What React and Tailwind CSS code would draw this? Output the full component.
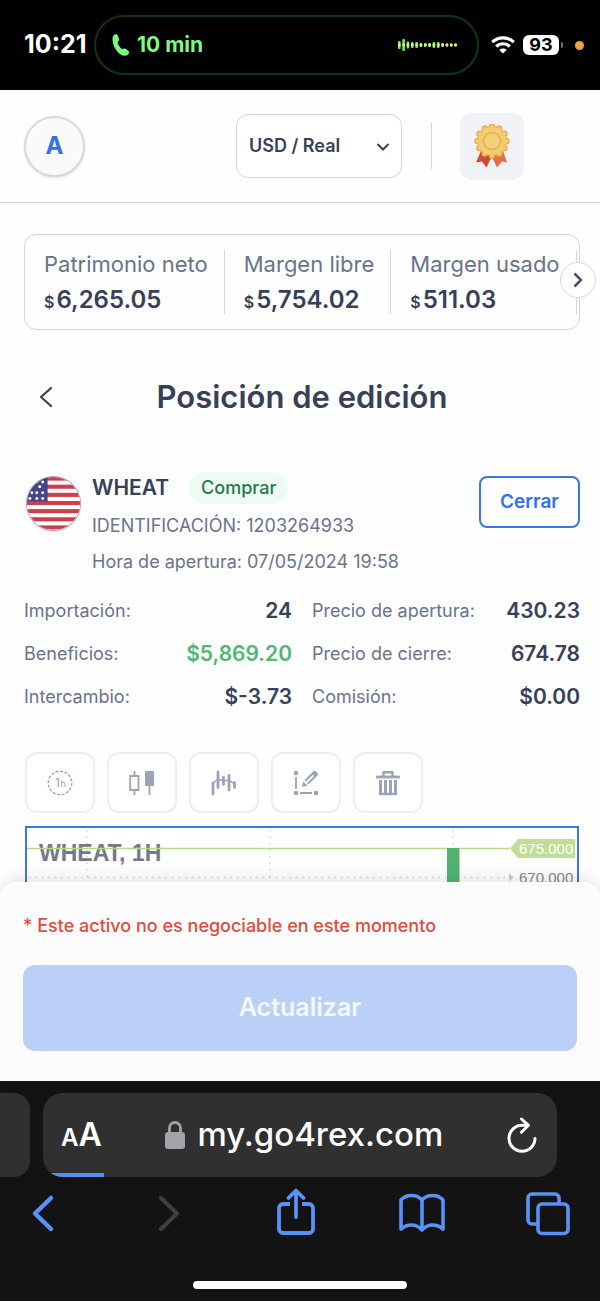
import React from 'react';

const balances = [
  { label: 'Patrimonio neto', value: '6,265.05' },
  { label: 'Margen libre', value: '5,754.02' },
  { label: 'Margen usado', value: '511.03' },
];

const details = [
  { label: 'Importación:', value: '24' },
  { label: 'Precio de apertura:', value: '430.23' },
  { label: 'Beneficios:', value: '$5,869.20', positive: true },
  { label: 'Precio de cierre:', value: '674.78' },
  { label: 'Intercambio:', value: '$-3.73' },
  { label: 'Comisión:', value: '$0.00' },
];

// Call audio level, one bar per sample
const levels = [8, 12, 7, 6, 6, 4, 4, 4, 6, 6, 4, 3, 3, 3];

const StatusBar = () => (
  <div className="flex h-[90px] items-center bg-black text-white">
    <span className="w-[94px] pl-6 text-[25px] font-bold">10:21</span>
    <div className="flex h-[60px] min-w-0 flex-1 items-center rounded-full border-2 border-[#123510] px-4 text-[#7dfa80]">
      <svg className="h-6 w-[18px]" viewBox="0 0 18 24" fill="currentColor" aria-hidden="true">
        <path d="M1.200 3C2.300.8 5 .6 5.800 2.500l1.200 3.500c.4 1.500-.5 2.400-1.500 3.200.6 2.600 2.200 5.200 4.800 7.100 1.200-.7 2.400-1 3.600-.2l2.600 1.900c1.300 1.200.4 3-1 4-2 1.300-4.500.9-6.500-.3C4.500 18.700.8 13 .6 7 .5 5.300.6 4.100 1.200 3z" />
      </svg>
      <span className="ml-[7px] text-[21px] font-bold">10 min</span>
      <svg className="ml-auto mr-[3px] h-4 w-[60px]" viewBox="0 0 60 16" aria-hidden="true">
        {levels.map((h, i) => (
          <g key={i}>
            <rect x={i * 4.33} y={8 - h / 2} width="2.6" height={h} rx="1" fill="#6dee72" />
            <rect x={i * 4.33} y="6.500" width="2.6" height="3" rx="1" fill="#e9ee72" />
          </g>
        ))}
      </svg>
    </div>
    <svg className="ml-3 h-[18px] w-6" viewBox="0 0 24 18" fill="none" stroke="currentColor" strokeWidth="3.200" aria-hidden="true">
      <path d="M1.200 6.200C7.300.3 16.700.3 22.800 6.200" />
      <path d="M5.200 10.500c3.900-3.700 9.700-3.700 13.600 0" />
      <path d="M8.300 13.900c2.200-1.900 5.200-1.900 7.400 0L12 17.600z" fill="currentColor" stroke="none" />
    </svg>
    <span className="ml-2 flex h-5 w-9 items-center justify-center rounded-md bg-white text-lg leading-5 font-bold text-black">93</span>
    <span className="ml-0.5 h-1.5 w-0.5 rounded-r bg-neutral-500" />
    <span className="mr-4 ml-3 h-[9px] w-[9px] rounded-full bg-[#f2a03c]" />
  </div>
);

const Medal = () => {
  const lobes = [...Array(12)].map((_, i) => {
    const a = (i * Math.PI) / 6;
    return { x: 18 + 14.5 * Math.cos(a), y: 17 + 14.5 * Math.sin(a) };
  });
  return (
    <svg className="h-11 w-9" viewBox="0 0 36 44" aria-hidden="true">
      <path d="M7 27L2 38.500l6-1 4.500 6L18 32z" fill="#cb4d2f" />
      <path d="M29 27l4 11.500-5-1-5 6L17 31z" fill="#df7148" />
      {lobes.map((p, i) => (
        <circle key={i} cx={p.x} cy={p.y} r="3.200" fill="#e9b04e" />
      ))}
      <circle cx="18" cy="17" r="15" fill="#e9b04e" />
      {lobes.map((p, i) => (
        <circle key={i} cx={p.x} cy={p.y} r="1.800" fill="#f3cb71" />
      ))}
      <circle cx="18" cy="17" r="14" fill="#f3cb71" />
      <circle cx="18" cy="17" r="8.500" fill="#f4cf78" stroke="#e9b04e" strokeWidth="1.500" />
    </svg>
  );
};

const Header = () => (
  <header className="flex h-[113px] items-center border-b border-gray-300 pr-[76px] pl-6">
    <button className="h-[61px] w-[61px] rounded-full border-2 border-[#d5d9e2] bg-[#fafafa] text-2xl font-bold text-[#3070ee] shadow">
      A
    </button>
    <div className="relative ml-auto">
      <select
        aria-label="Cuenta"
        className="h-16 w-[166px] appearance-none rounded-xl border border-gray-300 bg-white px-3 text-lg font-semibold text-[#374057]"
      >
        <option>USD / Real</option>
      </select>
      <svg className="pointer-events-none absolute top-7 right-3 h-2.5 w-3.5" viewBox="0 0 14 10" fill="none" stroke="#374057" strokeWidth="2" strokeLinecap="round" aria-hidden="true">
        <path d="M2 2.500l5 5 5-5" />
      </svg>
    </div>
    <div className="ml-[29px] h-[46px] w-px bg-gray-300" />
    <button aria-label="Nivel" className="ml-7 flex h-[67px] w-16 items-center justify-center rounded-xl bg-[#f1f2f6]">
      <Medal />
    </button>
  </header>
);

const Balances = () => (
  <div className="relative mt-[31px]">
    <div className="flex overflow-hidden rounded-xl border border-gray-300 py-[15px]">
      {balances.map((b) => (
        <div key={b.label} className="h-16 shrink-0 border-r border-gray-300 pr-4 pl-[19px]">
          <p className="text-[22px] leading-7 text-[#6a7389]">{b.label}</p>
          <p className="mt-1.5 flex items-baseline gap-0.5 font-semibold text-[#374057]">
            <span className="text-base leading-8">$</span>
            <span className="text-2xl leading-8">{b.value}</span>
          </p>
        </div>
      ))}
    </div>
    <button
      aria-label="Siguiente"
      className="absolute top-7 -right-4 flex h-9 w-9 items-center justify-center rounded-full border border-[#d0d5e0] bg-white"
    >
      <svg className="h-4 w-3" viewBox="0 0 12 16" fill="none" stroke="#4a5268" strokeWidth="2.500" aria-hidden="true">
        <path d="M2.500 1.500L9 8l-6.500 6.500" />
      </svg>
    </button>
  </div>
);

const Flag = () => (
  <svg className="mt-1 ml-0.5 h-[55px] w-[55px] shrink-0 rounded-full border border-gray-400 shadow" viewBox="0 0 54 54" aria-hidden="true">
    <rect width="54" height="54" fill="#fff" />
    {[...Array(7)].map((_, i) => (
      <rect key={i} y={i * 8.300 - 0.500} width="54" height="4.200" fill="#cd3f4c" />
    ))}
    <rect width="21" height="25" fill="#44448c" />
    {[[16, 5], [13, 10], [5, 16], [10, 16], [16, 16], [3, 22], [10, 22], [16, 22]].map(([x, y]) => (
      <circle key={`${x}-${y}`} cx={x} cy={y} r="1.500" fill="#fff" />
    ))}
  </svg>
);

const Position = () => (
  <section>
    <div className="mt-[55px] flex items-start">
      <Flag />
      <div className="ml-[11px] text-[#6a7389]">
        <div className="flex items-center gap-5">
          <h2 className="text-[21px] leading-8 font-semibold text-[#374057]">WHEAT</h2>
          <span className="rounded-full bg-[#edfbf3] px-3 py-0.5 text-lg leading-7 font-medium text-[#26784a]">Comprar</span>
        </div>
        <p className="mt-1 text-lg leading-9">IDENTIFICACIÓN: 1203264933</p>
        <p className="text-lg leading-9">Hora de apertura: 07/05/2024 19:58</p>
      </div>
      <button className="mt-1 ml-auto h-[52px] w-[101px] rounded-lg border-2 border-[#3975ee] text-[19px] font-semibold text-[#3070ee]">
        Cerrar
      </button>
    </div>
    <dl className="mt-[9px] grid grid-cols-2 gap-x-5">
      {details.map((d) => (
        <div key={d.label} className="flex h-[43px] items-center justify-between whitespace-nowrap">
          <dt className="text-lg text-[#6a7389]">{d.label}</dt>
          <dd className={d.positive ? 'text-[21px] font-semibold text-[#50b774]' : 'text-[21px] font-semibold text-[#374057]'}>
            {d.value}
          </dd>
        </div>
      ))}
    </dl>
  </section>
);

const ToolButton = ({ label, children }) => (
  <button
    aria-label={label}
    className="flex h-[61px] w-[70px] items-center justify-center rounded-xl border-2 border-[#eceef2] bg-white text-[#9ba3b7]"
  >
    <svg className="h-[26px] w-[26px]" viewBox="0 0 26 26" fill="none" stroke="currentColor" aria-hidden="true">
      {children}
    </svg>
  </button>
);

const Tools = () => (
  <div className="flex gap-3">
    <ToolButton label="Intervalo">
      <circle cx="13" cy="13" r="11.800" strokeWidth="1.400" strokeDasharray="3 1.600" />
      <text x="8" y="17" fontSize="12" fill="currentColor" stroke="none">1</text>
      <text x="13.500" y="17" fontSize="9" fill="currentColor" stroke="none">h</text>
    </ToolButton>
    <ToolButton label="Tipo de gráfico">
      <path d="M5.500 1v5M5.500 20v5M1.200 6h8.300v14H1.200zM20.500 16v9" strokeWidth="1.800" />
      <rect x="16" y="1" width="9" height="15" rx="1" fill="currentColor" stroke="none" />
    </ToolButton>
    <ToolButton label="Indicadores">
      <path d="M2 24V13M7 17.500V2M12.500 14.500V7.500M18 20V5.500M23.500 17.500v-5" strokeWidth="2.800" strokeLinecap="round" />
      <path d="M2 13l5-4 5.500 2 5.500-1 5.500 4" strokeWidth="1.500" />
    </ToolButton>
    <ToolButton label="Dibujar">
      <path d="M3 7v12M7 23h12" strokeWidth="1.800" />
      <g fill="currentColor" stroke="none">
        <circle cx="3" cy="3" r="2.300" />
        <circle cx="3" cy="23" r="2.300" />
        <circle cx="23" cy="23" r="2.300" />
        <path d="M9 17l1.300-5.500 4.200 4.200z" />
        <path d="M11.300 10.300L20.300 1.300q1.200-1.200 2.400 0l1.800 1.800q1.200 1.200 0 2.400L15.500 14.500z" />
      </g>
      <path d="M13.500 12.300l7-7" stroke="#fff" strokeWidth="1.800" />
    </ToolButton>
    <ToolButton label="Eliminar">
      <path d="M1 7h24" strokeWidth="2.800" />
      <path d="M8.500 6V2.200h9V6" strokeWidth="2.500" strokeLinejoin="round" />
      <path d="M5.500 10v15M10.500 10v15M15.500 10v15M20.500 10v15" strokeWidth="3" />
      <path d="M4 24h18" strokeWidth="2.500" />
    </ToolButton>
  </div>
);

const Chart = () => (
  <svg className="mt-[13px] block w-full border-2 border-b-0 border-[#3f76e4] bg-white" viewBox="0 0 550 70" role="img" aria-label="WHEAT, 1H">
    <g stroke="#d3d4d8" strokeWidth="1.500" strokeDasharray="1.500 5">
      <path d="M60 2v68M243 2v68M426 2v68M2 49.500h480" />
    </g>
    <text x="12" y="33" className="font-['Liberation_Sans',sans-serif] text-[23px] font-bold" fill="#747986">WHEAT, 1H</text>
    <path d="M0 20.500h482" stroke="#b5dc84" strokeWidth="1.500" />
    <rect x="420" y="20" width="12.500" height="50" fill="#52b370" />
    <path d="M483 20.500l8-9.500h57v19h-57z" fill="#c0df94" />
    <path d="M482 45.500l4.500 4-4.500 4z" fill="#c5c9dc" />
    <g className="font-['Liberation_Sans',sans-serif] text-[15px]">
      <text x="492" y="26" fill="#fff">675.000</text>
      <text x="492" y="55" fill="#85878c">670.000</text>
    </g>
  </svg>
);

const NavButton = ({ label, children }) => (
  <button aria-label={label} className="flex w-[46px] justify-center">
    {children}
  </button>
);

const Browser = () => (
  <footer className="bg-[#131313] pt-3 pb-3">
    <div className="flex h-[84px] gap-[13px]">
      <div className="w-[30px] rounded-r-2xl bg-[#303030]" />
      <div className="relative mr-[43px] flex min-w-0 flex-1 items-center overflow-hidden rounded-[20px] bg-[#303030] pr-5 pl-[18px] text-white">
        <button aria-label="Tamaño de texto" className="flex items-baseline font-semibold">
          <span className="text-2xl">A</span>
          <span className="text-[32px]">A</span>
        </button>
        <div className="flex flex-1 items-center justify-center gap-3">
          <svg className="h-7 w-5 text-[#a3a2aa]" viewBox="0 0 20 28" aria-hidden="true">
            <rect y="11" width="20" height="17" rx="3" fill="currentColor" />
            <path d="M4.500 12V7a5.500 5.500 0 0 1 11 0v5" fill="none" stroke="currentColor" strokeWidth="2.800" />
          </svg>
          <span className="text-[33px] font-medium">my.go4rex.com</span>
        </div>
        <button aria-label="Recargar">
          <svg className="h-9 w-[30px]" viewBox="0 0 30 36" fill="none" stroke="currentColor" strokeWidth="3" strokeLinecap="round" strokeLinejoin="round" aria-hidden="true">
            <path d="M20 8.300H15A13 13 0 1 0 28 21.500" />
            <path d="M14.500 2l7 6.300-7 7" />
          </svg>
        </button>
        <div className="absolute bottom-0 left-0 h-1 w-[61px] bg-[#5590f5]" />
      </div>
    </div>
    <nav className="flex items-center justify-between pt-[11px] pr-[29px] pl-5 text-[#5891f8]">
      <NavButton label="Atrás">
        <svg className="h-12 w-6" viewBox="0 0 24 48" fill="none" stroke="currentColor" strokeWidth="4.500" strokeLinecap="round" strokeLinejoin="round" aria-hidden="true">
          <path d="M20 10L4 25.500 20 41" />
        </svg>
      </NavButton>
      <NavButton label="Adelante">
        <svg className="h-12 w-6 text-[#404040]" viewBox="0 0 24 48" fill="none" stroke="currentColor" strokeWidth="4" strokeLinecap="round" strokeLinejoin="round" aria-hidden="true">
          <path d="M4 10l16 15.500L4 41" />
        </svg>
      </NavButton>
      <NavButton label="Compartir">
        <svg className="h-12 w-[38px]" viewBox="0 0 38 48" fill="none" stroke="currentColor" strokeWidth="3.800" strokeLinecap="round" strokeLinejoin="round" aria-hidden="true">
          <path d="M13 16H6a4 4 0 0 0-4 4v21a4 4 0 0 0 4 4h26a4 4 0 0 0 4-4V20a4 4 0 0 0-4-4h-7" strokeLinecap="butt" />
          <path d="M19 29V3M11.500 10L19 2.500l7.500 7.500" />
        </svg>
      </NavButton>
      <NavButton label="Marcadores">
        <svg className="h-12 w-[46px]" viewBox="0 0 46 48" fill="none" stroke="currentColor" strokeWidth="3.600" strokeLinejoin="round" aria-hidden="true">
          <path d="M23 12C18 6 7 6 2 12v29c6-5 15-6 21 1 6-7 15-6 21-1V12C39 6 28 6 23 12zM23 12v29" />
        </svg>
      </NavButton>
      <NavButton label="Pestañas">
        <svg className="h-12 w-11" viewBox="0 0 44 48" fill="none" stroke="currentColor" strokeWidth="3.600" aria-hidden="true">
          <rect x="12" y="16" width="30" height="29.500" rx="4" />
          <path d="M12 36H6a4 4 0 0 1-4-4V10a4 4 0 0 1 4-4h23a4 4 0 0 1 4 4v6" />
        </svg>
      </NavButton>
    </nav>
    <div className="mx-auto mt-[45px] h-2 w-[214px] rounded-full bg-white" />
  </footer>
);

export default function App() {
  return (
    <div className="bg-[#fefefe] font-[Inter,sans-serif]">
      <StatusBar />
      <Header />
      <main className="pr-5 pl-6">
        <Balances />
        <div className="mt-[47px] flex items-center">
          <button aria-label="Volver" className="w-11 pl-[15px]">
            <svg className="h-[22px] w-3.5" viewBox="0 0 14 22" fill="none" stroke="#374057" strokeWidth="2.200" strokeLinecap="round" strokeLinejoin="round" aria-hidden="true">
              <path d="M12 2L2 11l10 9" />
            </svg>
          </button>
          <h1 className="flex-1 pr-11 text-center text-[31px] leading-10 font-semibold text-[#374057]">Posición de edición</h1>
        </div>
        <Position />
        <div className="mt-[34px] px-px">
          <Tools />
          <Chart />
        </div>
      </main>
      {/* Update sheet, overlaps the lower part of the chart */}
      <div className="relative -mt-4 rounded-t-2xl bg-[#fcfcfc] px-[23px] pt-7 pb-[30px] shadow-[0_-4px_16px_rgba(0,0,0,0.1)]">
        <p className="text-lg leading-8 font-medium text-[#e14b3c]">* Este activo no es negociable en este momento</p>
        <button disabled className="mt-[23px] h-[86px] w-full rounded-xl bg-[#bbd0f6] text-[25px] font-semibold text-[#f4f7fe]">
          Actualizar
        </button>
      </div>
      <Browser />
    </div>
  );
}
